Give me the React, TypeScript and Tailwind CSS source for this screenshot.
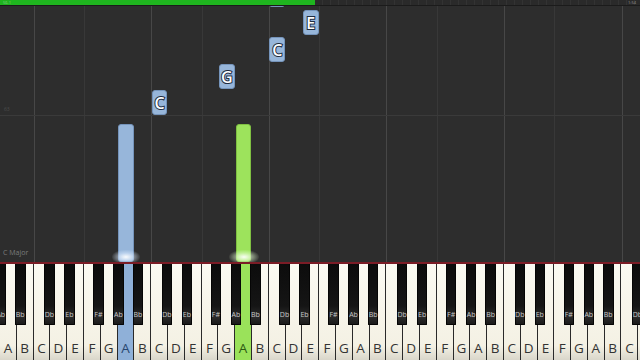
import React from "react";

const KEY_W = 16.8;
const LETTERS = ["A", "B", "C", "D", "E", "F", "G"];

// black keys, offset from the C that starts each octave
const BLACKS = [
  { name: "Db", off: 10.5 },
  { name: "Eb", off: 30.5 },
  { name: "F#", off: 59.5 },
  { name: "Ab", off: 79.5 },
  { name: "Bb", off: 99 },
];

type Note = { key: number; top: number; height: number; label?: string; color: "blue" | "green" };

// page coordinates minus the 6px top bar
const NOTES: Note[] = [
  { key: 16, top: -24, height: 25, label: "C", color: "blue" },
  { key: 18, top: 4, height: 25, label: "E", color: "blue" },
  { key: 16, top: 31, height: 25, label: "C", color: "blue" },
  { key: 13, top: 58, height: 25, label: "G", color: "blue" },
  { key: 9, top: 84, height: 25, label: "C", color: "blue" },
  { key: 7, top: 118, height: 138, color: "blue" },
  { key: 14, top: 118, height: 138, color: "green" },
];

const pressed: Record<number, "blue" | "green"> = { 7: "blue", 14: "green" };

export default function App() {
  const whites = Array.from({ length: 39 }, (_, i) => i);
  const blacks: { name: string; left: number }[] = [];
  for (let k = -1; k < 6; k++) {
    const c = (2 + 7 * k) * KEY_W;
    BLACKS.forEach((b) => blacks.push({ name: b.name, left: c + b.off }));
  }

  return (
    <div className="w-[640px] h-[360px] overflow-hidden flex flex-col bg-[#2d2d2d] font-['Open_Sans','DejaVu_Sans',sans-serif]">
      {/* progress bar */}
      <div className="relative h-[6px] shrink-0 flex bg-[#262626] border-b border-[#1b1b1b] z-20">
        <div className="w-[315px] h-full bg-[#1fb51f] pl-[3px] text-[4px] leading-[5px] text-[#7fd07f]">56.1</div>
        <div className="flex-1 h-full flex justify-end pr-[4px] text-[4px] leading-[5px] text-[#9a9a9a] bg-[repeating-linear-gradient(90deg,#2a2a2a_0px,#2a2a2a_7px,#333_7px,#333_8px)]">
          1:54
        </div>
      </div>

      {/* falling notes area, grid lines drawn as background */}
      <div className="relative h-[256px] shrink-0 overflow-hidden flex flex-col bg-[repeating-linear-gradient(90deg,transparent_0px,transparent_33.6px,#474747_33.6px,#474747_34.6px,transparent_34.6px,transparent_84px,#383838_84px,#383838_85px,transparent_85px,transparent_117.6px)]">
        <div className="h-[109px] shrink-0" />
        <div className="h-px bg-[#3a3a3a] shrink-0" />
        <div className="flex-1" />
        <div className="h-[14px] shrink-0 pl-[3px] text-[7px] leading-[10px] text-[#7c7c7c]">C Major</div>
        <span className="absolute left-[4px] top-[100px] text-[5px] text-[#4d4d4d]">63</span>

        {NOTES.map((n, idx) => (
          <div
            key={idx}
            className={
              n.color === "blue"
                ? "absolute rounded-[3px] bg-[#97b6da] border border-[#7594bb] flex items-center justify-center"
                : "absolute rounded-[3px] bg-[#9de35c] border border-[#7fc042] flex items-center justify-center"
            }
            style={{ left: n.key * KEY_W + 0.5, width: KEY_W - 1, top: n.top, height: n.height }}
          >
            {n.label && (
              <span className="text-[16px] leading-none font-semibold text-white [-webkit-text-stroke:2px_#1e2c40] [paint-order:stroke_fill]">
                {n.label}
              </span>
            )}
          </div>
        ))}

        {/* glow where the notes hit the keys */}
        <div className="absolute left-[112px] top-[244px] w-[28px] h-[14px] rounded-full bg-[radial-gradient(ellipse_at_center,rgba(255,255,255,0.95)_0%,rgba(220,235,255,0.5)_40%,rgba(255,255,255,0)_75%)]" />
        <div className="absolute left-[229px] top-[244px] w-[30px] h-[14px] rounded-full bg-[radial-gradient(ellipse_at_center,rgba(255,255,255,0.95)_0%,rgba(230,255,210,0.5)_40%,rgba(255,255,255,0)_75%)]" />
      </div>

      {/* keyboard */}
      <div className="relative flex-1 border-t-2 border-[#7b1c26] bg-[#111]">
        <div className="flex h-full">
          {whites.map((i) => {
            const p = pressed[i];
            return (
              <div
                key={i}
                className={
                  "shrink-0 w-[16.8px] h-full border-r border-[#2a2a2a] flex items-end justify-center pb-[4px] " +
                  (p === "blue"
                    ? "bg-[#8fb0d8]"
                    : p === "green"
                    ? "bg-[#9ae25a]"
                    : "bg-[linear-gradient(180deg,#fbfaf2_0%,#f4f1e4_85%,#d9d6ca_100%)]")
                }
              >
                <span
                  className={
                    "text-[13.5px] leading-[16px] " +
                    (p === "blue" ? "text-[#27456f]" : p === "green" ? "text-[#2d5a12]" : "text-[#333]")
                  }
                >
                  {LETTERS[i % 7]}
                </span>
              </div>
            );
          })}
        </div>
        {blacks.map((b, idx) => (
          <div
            key={idx}
            className="absolute top-0 w-[10.5px] h-[61px] rounded-b-[1px] bg-[linear-gradient(180deg,#0c0c0c_0%,#151515_70%,#2b2b2b_88%,#1a1a1a_100%)] border-x border-b border-[#050505] flex items-end justify-center pb-[6px]"
            style={{ left: b.left }}
          >
            <span className="text-[7px] leading-none text-[#c8c8c8]">{b.name}</span>
          </div>
        ))}
      </div>
    </div>
  );
}
